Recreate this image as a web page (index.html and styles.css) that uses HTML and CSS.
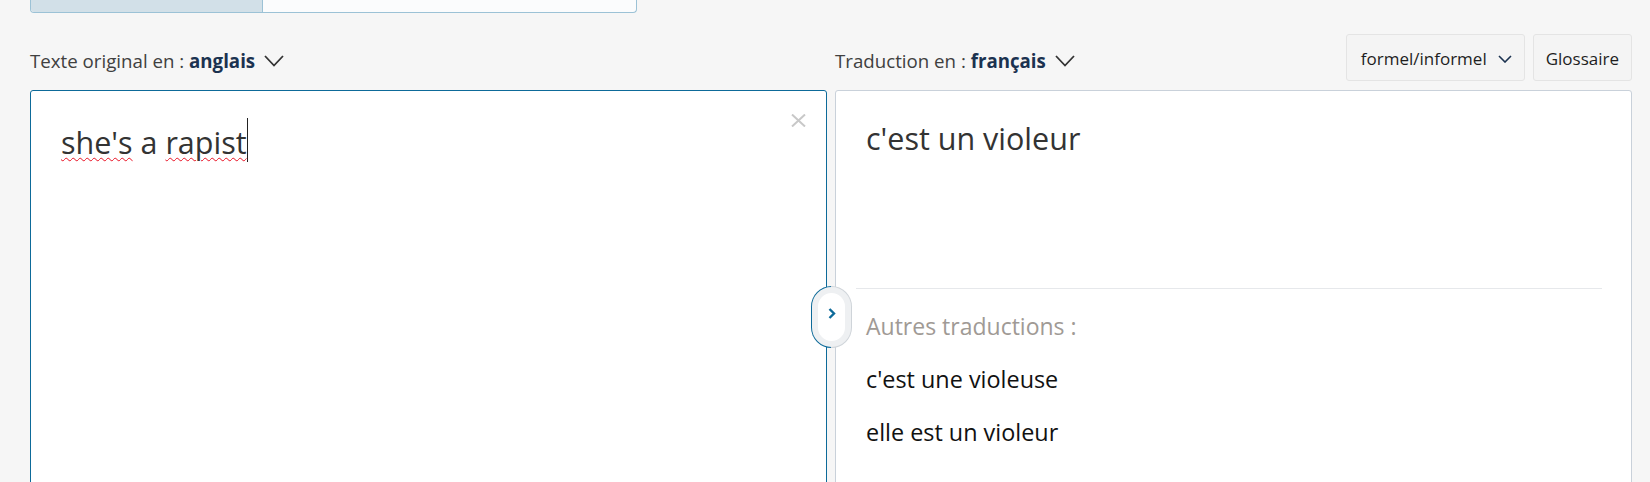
FILE: index.html
```html
<!DOCTYPE html>
<html lang="fr">
<head>
  <meta charset="UTF-8" />
  <title>Traducteur</title>
  <link rel="stylesheet" href="styles.css">
</head>
<body>

  <!-- Onglets (haut coupé) -->
  <div class="tabs">
    <div class="tab active"></div>
    <div class="tab"></div>
  </div>

  <div class="workspace">

    <!-- Colonne source -->
    <div class="column">
      <div class="lang-bar">
        <div class="lang-label">Texte original en : <b>anglais</b>
          <svg class="chev" viewBox="0 0 20 12"><path d="M1 1 L10 10.5 L19 1"/></svg>
        </div>
      </div>
      <div class="box source">
        <div class="input-text"><span class="misspelled">she's</span> a <span class="misspelled">rapist</span><span class="caret"></span></div>
        <svg class="clear" viewBox="0 0 15 13"><path d="M1 0.5 L14 12.5 M14 0.5 L1 12.5"/></svg>
      </div>
    </div>

    <!-- Colonne cible -->
    <div class="column">
      <div class="lang-bar">
        <div class="lang-label">Traduction en : <b>français</b>
          <svg class="chev" viewBox="0 0 20 12"><path d="M1 1 L10 10.5 L19 1"/></svg>
        </div>
        <div class="tools">
          <button class="tool">formel/informel
            <svg class="chev-small" viewBox="0 0 14 8"><path d="M1 1 L7 7 L13 1"/></svg>
          </button>
          <button class="tool glossary">Glossaire</button>
        </div>
      </div>
      <div class="box target">
        <div class="result">c'est un violeur</div>
        <div class="divider"></div>
        <div class="alts">
          <p class="alts-title">Autres traductions :</p>
          <p>c'est une violeuse</p>
          <p>elle est un violeur</p>
        </div>
      </div>
    </div>

    <!-- bouton d'inversion -->
    <div class="swap">
      <div class="swap-inner">
        <svg viewBox="0 0 8 11"><path d="M1.5 1 L6 5.5 L1.5 10"/></svg>
      </div>
    </div>

  </div>

</body>
</html>
```

FILE: styles.css
```css
html, body {
  overflow: hidden;
}

body {
  margin: 0;
  background: #f6f6f6;
  font-family: 'Open Sans', 'Noto Sans', sans-serif;
  color: #333;
}

.tabs {
  display: flex;
  width: 605px;
  height: 12px;
  margin-left: 30px;
  border: 1px solid #9cc2d6;
  border-top: none;
  border-radius: 0 0 4px 4px;
  overflow: hidden;
  background: #fbfcfd;
}

.tab {
  flex: 1;
}

.tab.active {
  flex: 0 0 231px;
  background: #d2e0e8;
  border-right: 1px solid #9cc2d6;
}

.workspace {
  position: relative;
  display: grid;
  grid-template-columns: 797px 797px;
  gap: 8px;
  margin: 21px 0 0 30px;
}

.lang-bar {
  display: flex;
  justify-content: space-between;
  align-items: center;
  height: 47px;
  margin-bottom: 9px;
}

.lang-label {
  display: flex;
  align-items: center;
  padding-top: 6px;
  font-size: 18.7px;
  line-height: 24px;
  color: #404040;
  white-space: pre;
}

.lang-label b {
  color: #1b3250;
  font-weight: 700;
}

.chev {
  width: 20px;
  height: 12px;
  margin-left: 9px;
  fill: none;
  stroke: #333;
  stroke-width: 1.8;
}

.tools {
  display: flex;
  gap: 8px;
}

.tool {
  display: flex;
  align-items: center;
  height: 47px;
  padding: 2px 14px 0;
  font-family: inherit;
  font-size: 17px;
  color: #1e1e1e;
  background: #f4f4f4;
  border: 1px solid #e4e4e4;
  border-radius: 3px;
}

.tool.glossary {
  padding: 2px 12px 0;
}

.chev-small {
  width: 14px;
  height: 8px;
  margin-left: 11px;
  margin-right: -2px;
  fill: none;
  stroke: #1b3250;
  stroke-width: 1.6;
}

.box {
  position: relative;
  height: 400px;
  background: #fff;
  border-radius: 3px;
}

.box.source {
  border: 1px solid #0d6a99;
}

.box.target {
  border: 1px solid #c9d1da;
}

.input-text, .result {
  padding: 27px 30px;
  font-size: 30.5px;
  line-height: 40px;
  color: #333;
}

.result {
  height: 143px;
}

.misspelled {
  text-decoration: underline wavy #e81123;
  text-decoration-thickness: 1px;
  text-underline-offset: 3px;
}

.caret {
  display: inline-block;
  width: 0;
  height: 44px;
  border-left: 1.5px solid #222;
  vertical-align: -8px;
}

.clear {
  position: absolute;
  top: 23px;
  right: 20px;
  width: 15px;
  height: 13px;
  fill: none;
  stroke: #c8c8c8;
  stroke-width: 2;
}

.divider {
  height: 1px;
  margin: 0 29px 0 20px;
  background: #e6e8eb;
}

.alts {
  padding: 0 30px;
}

.alts p {
  margin: 23px 0 0;
  font-size: 23.4px;
  line-height: 30px;
  color: #111;
}

.alts p.alts-title {
  margin-top: 22px;
  font-size: 23px;
  color: #a09a95;
}

.swap {
  position: absolute;
  top: 252px;
  left: 781px;
  width: 41px;
  height: 62px;
  padding: 1px;
  box-sizing: border-box;
  border-radius: 21px;
  background: linear-gradient(to right, #0d6a99 50%, #cfd4d9 50%);
}

.swap-inner {
  display: flex;
  justify-content: center;
  align-items: center;
  height: 100%;
  box-sizing: border-box;
  border: 6px solid #eef0f2;
  border-radius: 20px;
  background: #fff;
}

.swap-inner svg {
  width: 8px;
  height: 11px;
  margin-top: -7px;
  fill: none;
  stroke: #0d6a99;
  stroke-width: 2.4;
}
```
